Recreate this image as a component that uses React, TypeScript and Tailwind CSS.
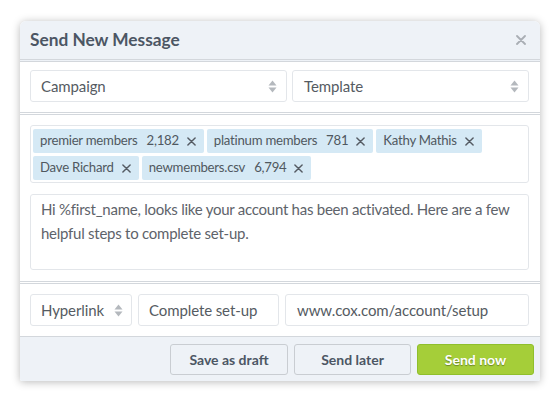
import React from "react";

const font = { fontFamily: "Lato, 'Open Sans', sans-serif" };

function Arrows() {
  return (
    <svg width="9" height="13" viewBox="0 0 9 13" className="shrink-0">
      <path d="M4.5 0.5 L8.5 5.5 L0.5 5.5 Z" fill="#b4b8bd" />
      <path d="M4.5 12.5 L8.5 7.5 L0.5 7.5 Z" fill="#b4b8bd" />
    </svg>
  );
}

function X({ size = 8, color = "#555b63", stroke = 1.6 }: { size?: number; color?: string; stroke?: number }) {
  return (
    <svg width={size} height={size} viewBox="0 0 10 10" className="shrink-0">
      <path d="M1 1 L9 9 M9 1 L1 9" stroke={color} strokeWidth={stroke} strokeLinecap="round" />
    </svg>
  );
}

function Tag({ label, count }: { label: string; count?: string }) {
  return (
    <div className="flex h-[24px] items-center rounded-[2px] bg-[#d5e9f5] pl-[7px] pr-[8px] text-[13.2px] tracking-[-0.25px] text-[#505860]">
      <span>{label}</span>
      {count && <span className="ml-[9px]">{count}</span>}
      <span className="ml-[8px] flex items-center">
        <X size={9} />
      </span>
    </div>
  );
}

export default function App() {
  return (
    <div className="min-h-[402px] w-[560px] bg-white pt-[21px] pl-[20px]" style={font}>
      <div className="w-[520px] overflow-hidden rounded-t-[6px] rounded-b-[2px] bg-white shadow-[0_1px_9px_rgba(0,0,0,0.28)]">
        {/* header */}
        <div className="flex h-[41px] items-center justify-between border-b-[3px] border-double border-[#d3d7dc] bg-[#eef2f7] pl-[10px] pr-[14px]">
          <span className="text-[17.3px] font-bold text-[#4c5664]">Send New Message</span>
          <X size={10} color="#a9aeb4" stroke={1.8} />
        </div>
        {/* selects */}
        <div className="flex gap-[5px] border-b-[3px] border-double border-[#d3d7dc] pt-[8px] pb-[10px] pl-[10px] pr-[11px] text-[15px] tracking-[-0.1px] text-[#555b62]">
          <div className="flex h-[32px] flex-1 items-center justify-between rounded-[3px] border border-[#e3e6ea] pl-[10px] pr-[9px]">
            <span>Campaign</span>
            <Arrows />
          </div>
          <div className="flex h-[32px] w-[237px] items-center justify-between rounded-[3px] border border-[#e3e6ea] pl-[11px] pr-[9px]">
            <span>Template</span>
            <Arrows />
          </div>
        </div>
        {/* recipients + message */}
        <div className="flex flex-col gap-[11px] border-b-[3px] border-double border-[#d3d7dc] pt-[10px] pb-[11px] pl-[10px] pr-[11px]">
          <div className="flex h-[58px] flex-wrap content-start gap-x-[3px] gap-y-[3px] rounded-[3px] border border-[#e3e6ea] pt-[3px] pl-[2px] pr-[2px]">
            <Tag label="premier members" count="2,182" />
            <Tag label="platinum members" count="781" />
            <Tag label="Kathy Mathis" />
            <Tag label="Dave Richard" />
            <Tag label="newmembers.csv" count="6,794" />
          </div>
          <div className="h-[76px] rounded-[3px] border border-[#e3e6ea] pt-[3px] pl-[10px] pr-[3px] text-[15px] tracking-[-0.25px] leading-[23.5px] text-[#5e636a]">
            Hi %first_name, looks like your account has been activated. Here are a few helpful steps to complete set-up.
          </div>
        </div>
        {/* link row */}
        <div className="flex gap-[6px] border-b border-[#d3d7dc] pt-[10px] pb-[10px] pl-[10px] pr-[11px] text-[15px] tracking-[-0.1px] text-[#555b62]">
          <div className="flex h-[32px] w-[102px] items-center justify-between rounded-[3px] border border-[#e3e6ea] pl-[10px] pr-[8px]">
            <span>Hyperlink</span>
            <Arrows />
          </div>
          <div className="flex h-[32px] w-[141px] items-center rounded-[3px] border border-[#e3e6ea] pl-[10px]">
            Complete set-up
          </div>
          <div className="flex h-[32px] flex-1 items-center rounded-[3px] border border-[#e3e6ea] pl-[11px]">
            www.cox.com/account/setup
          </div>
        </div>
        {/* footer */}
        <div className="flex h-[44px] items-start justify-end gap-[6px] bg-[#eef2f7] pt-[7px] pr-[6px]">
          <button className="h-[31px] w-[118px] rounded-[3px] border border-[#c9cdd2] bg-[#eef2f7] text-[14px] font-bold text-[#4c5664]">
            Save as draft
          </button>
          <button className="h-[31px] w-[117px] rounded-[3px] border border-[#c9cdd2] bg-[#eef2f7] text-[14px] font-bold text-[#4c5664]">
            Send later
          </button>
          <button className="h-[31px] w-[117px] rounded-[3px] border border-[#8fbf2c] bg-[#a5ce39] text-[14px] font-bold text-white [text-shadow:0_1px_1px_rgba(0,0,0,0.35)]">
            Send now
          </button>
        </div>
      </div>
    </div>
  );
}
